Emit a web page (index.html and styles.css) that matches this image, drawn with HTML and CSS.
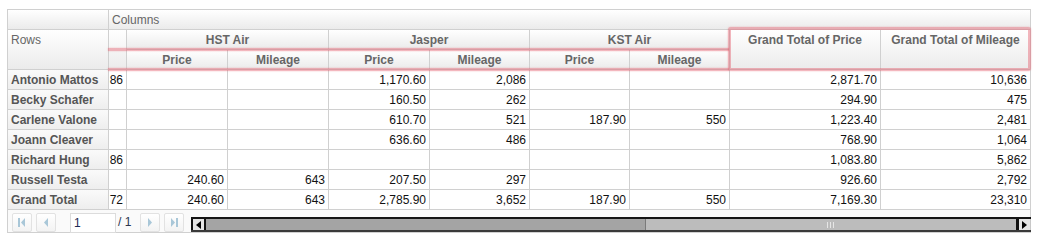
FILE: index.html
```html
<!DOCTYPE html>
<html>
<head>
<meta charset="utf-8">
<link rel="stylesheet" href="styles.css">
</head>
<body>
<div class="wrap">
  <div class="pivot">
    <div class="hd corner"></div>
    <div class="hd columns">Columns</div>
    <div class="hd rows">Rows</div>
    <div class="hd narrow"></div>
    <div class="hd grp g1">HST Air</div>
    <div class="hd grp g2">Jasper</div>
    <div class="hd grp g3">KST Air</div>
    <div class="hd gt gt1">Grand Total of Price</div>
    <div class="hd gt gt2">Grand Total of Mileage</div>
    <div class="hd sub">Price</div>
    <div class="hd sub">Mileage</div>
    <div class="hd sub">Price</div>
    <div class="hd sub">Mileage</div>
    <div class="hd sub">Price</div>
    <div class="hd sub">Mileage</div>

    <div class="name">Antonio Mattos</div>
    <div class="clip">86</div><div class="c"></div><div class="c"></div><div class="c">1,170.60</div><div class="c">2,086</div><div class="c"></div><div class="c"></div><div class="c">2,871.70</div><div class="c">10,636</div>

    <div class="name">Becky Schafer</div>
    <div class="clip"></div><div class="c"></div><div class="c"></div><div class="c">160.50</div><div class="c">262</div><div class="c"></div><div class="c"></div><div class="c">294.90</div><div class="c">475</div>

    <div class="name">Carlene Valone</div>
    <div class="clip"></div><div class="c"></div><div class="c"></div><div class="c">610.70</div><div class="c">521</div><div class="c">187.90</div><div class="c">550</div><div class="c">1,223.40</div><div class="c">2,481</div>

    <div class="name">Joann Cleaver</div>
    <div class="clip"></div><div class="c"></div><div class="c"></div><div class="c">636.60</div><div class="c">486</div><div class="c"></div><div class="c"></div><div class="c">768.90</div><div class="c">1,064</div>

    <div class="name">Richard Hung</div>
    <div class="clip">86</div><div class="c"></div><div class="c"></div><div class="c"></div><div class="c"></div><div class="c"></div><div class="c"></div><div class="c">1,083.80</div><div class="c">5,862</div>

    <div class="name">Russell Testa</div>
    <div class="clip"></div><div class="c">240.60</div><div class="c">643</div><div class="c">207.50</div><div class="c">297</div><div class="c"></div><div class="c"></div><div class="c">926.60</div><div class="c">2,792</div>

    <div class="name">Grand Total</div>
    <div class="clip">72</div><div class="c">240.60</div><div class="c">643</div><div class="c">2,785.90</div><div class="c">3,652</div><div class="c">187.90</div><div class="c">550</div><div class="c">7,169.30</div><div class="c">23,310</div>

    <div class="pager">
      <span class="pbtn">
        <svg width="8" height="9" viewBox="0 0 8 9"><rect x="0" y="0" width="2" height="9" fill="#a9c7d8"/><path d="M7 0 L3 4.5 L7 9 Z" fill="#a9c7d8"/></svg>
      </span>
      <span class="pbtn">
        <svg width="6" height="9" viewBox="0 0 6 9"><path d="M5 0 L1 4.5 L5 9 Z" fill="#a9c7d8"/></svg>
      </span>
      <span class="pinput">1</span>
      <span class="ptotal">/ 1</span>
      <span class="pbtn">
        <svg width="6" height="9" viewBox="0 0 6 9"><path d="M1 0 L5 4.5 L1 9 Z" fill="#a9c7d8"/></svg>
      </span>
      <span class="pbtn">
        <svg width="8" height="9" viewBox="0 0 8 9"><path d="M1 0 L5 4.5 L1 9 Z" fill="#a9c7d8"/><rect x="6" y="0" width="2" height="9" fill="#a9c7d8"/></svg>
      </span>
      <div class="sb">
        <span class="sb-btn sb-left"><svg width="5" height="8" viewBox="0 0 5 8"><path d="M5 0 L0 4 L5 8 Z" fill="#000"/></svg></span>
        <span class="sb-track"></span>
        <span class="sb-thumb"><span class="grip"></span></span>
        <span class="sb-btn sb-right"><svg width="5" height="8" viewBox="0 0 5 8"><path d="M0 0 L5 4 L0 8 Z" fill="#000"/></svg></span>
      </div>
    </div>
  </div>
  <div class="mark mark-a"></div>
  <div class="mark mark-b"></div>
  <div class="mark mark-box"></div>
</div>
</body>
</html>
```

FILE: styles.css
```css
html, body {
  margin: 0;
  padding: 0;
  background: #fff;
}

.wrap {
  position: relative;
  padding: 9px 0 0 7px;
  font-family: "Liberation Sans", Arial, sans-serif;
  font-size: 12px;
}

.pivot {
  display: grid;
  width: 1022px;
  grid-template-columns: 100px 17px 100px 100px 100px 99px 99px 99px 150px 149px;
  grid-template-rows: repeat(10, 19px) 22px;
  gap: 1px;
  background: #d0d0d0;
  border: 1px solid #d0d0d0;
}

.pivot > div {
  box-sizing: border-box;
  padding: 2px 3px 0;
  line-height: 17px;
  white-space: nowrap;
  overflow: hidden;
  background: #fff;
}

.pivot > .hd {
  background: linear-gradient(#ffffff, #ebebeb);
  color: #666;
}

.corner { grid-column: 1; grid-row: 1; }
.columns { grid-column: 2 / 11; grid-row: 1; font-weight: normal; }
.rows { grid-column: 1; grid-row: 2 / 4; }
.narrow { grid-column: 2; grid-row: 2 / 4; }
.g1 { grid-column: 3 / 5; grid-row: 2; }
.g2 { grid-column: 5 / 7; grid-row: 2; }
.g3 { grid-column: 7 / 9; grid-row: 2; }
.gt1 { grid-column: 9; grid-row: 2 / 4; }
.gt2 { grid-column: 10; grid-row: 2 / 4; }

.grp, .sub, .gt {
  font-weight: bold;
  text-align: center;
}

.pivot > .name {
  background: linear-gradient(#fafafa, #eeeeee);
  color: #555;
  font-weight: bold;
}

.c {
  text-align: right;
  color: #111;
}

.pivot > .clip {
  display: flex;
  justify-content: flex-end;
  padding: 2px 3px 0 0;
  color: #111;
}

.pivot > .pager {
  grid-column: 1 / 11;
  display: flex;
  align-items: flex-start;
  padding: 3px 0 0 4px;
  background: #fafafa;
  overflow: visible;
}

.pbtn {
  box-sizing: border-box;
  width: 20px;
  height: 19px;
  margin-right: 4px;
  border: 1px solid #e2e2e2;
  border-radius: 2px;
  background: linear-gradient(#ffffff, #f3f3f3);
  display: flex;
  align-items: center;
  justify-content: center;
}

.pinput {
  box-sizing: border-box;
  width: 46px;
  height: 20px;
  margin-left: 10px;
  padding-left: 3px;
  border: 1px solid #dcdcdc;
  background: #fff;
  color: #1d2a55;
  line-height: 18px;
}

.ptotal {
  margin-left: 2px;
  width: 22px;
  color: #2b3550;
  line-height: 19px;
}

.sb {
  box-sizing: border-box;
  flex: 1;
  display: flex;
  height: 15px;
  margin: 4px -1px 0 3px;
  border-top: 2px solid #151515;
  border-bottom: 2px solid #3a3a3a;
  background: #a4a4a4;
}

.sb-btn {
  box-sizing: border-box;
  display: flex;
  align-items: center;
  justify-content: center;
  background: #e4e4e4;
}

.sb-left {
  width: 15px;
  border-left: 2px solid #111;
  border-right: 2px solid #111;
}

.sb-track {
  flex: 1;
  background: #a4a4a4;
}

.sb-thumb {
  width: 370px;
  background: #bcbcbc;
  border-left: 1px solid #7a7a7a;
  display: flex;
  align-items: center;
  justify-content: center;
}

.grip {
  width: 9px;
  height: 6px;
  background: repeating-linear-gradient(90deg, #e6e6e6 0 1px, transparent 1px 3px);
}

.sb-right {
  width: 15px;
  border-left: 3px solid #111;
  border-right: 1px solid #c8c8c8;
}

.mark {
  position: absolute;
  background: rgba(228, 96, 110, 0.45);
  box-shadow: 0 0 1.5px rgba(228, 96, 110, 0.55);
}

.mark-a {
  left: 108px;
  top: 48px;
  width: 621px;
  height: 3px;
}

.mark-b {
  left: 108px;
  top: 68px;
  width: 621px;
  height: 3px;
}

.mark-box {
  box-sizing: border-box;
  left: 728px;
  top: 27px;
  width: 303px;
  height: 44px;
  background: transparent;
  border: 3px solid rgba(228, 96, 110, 0.45);
  border-radius: 3px;
}
```
